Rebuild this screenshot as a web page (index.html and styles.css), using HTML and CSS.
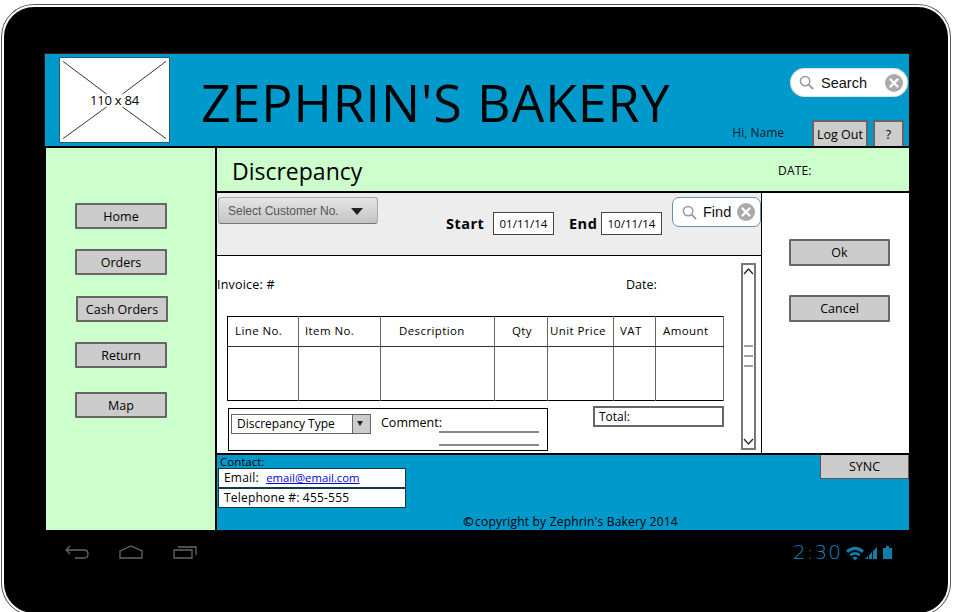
FILE: index.html
```html
<!DOCTYPE html>
<html lang="en">
<head>
<meta charset="utf-8">
<title>Zephrin's Bakery - Discrepancy</title>
<link rel="stylesheet" href="styles.css">
</head>
<body>
<div class="page">
  <div class="device">
    <div class="screen">
      <header class="header">
        <div class="logo">
          <svg class="logo-x" viewBox="0 0 110 84" aria-hidden="true">
            <path d="M3 3 47 36M107 3 63 36M3 81 47 49M107 81 63 49" fill="none" stroke="#333" stroke-width="1"/>
          </svg>
          <span class="logo-text">110 x 84</span>
        </div>
        <h1 class="brand">ZEPHRIN'S BAKERY</h1>
        <div class="header-side">
          <div class="search">
            <svg class="lens" viewBox="0 0 16 16" aria-hidden="true"><circle cx="6.5" cy="6.5" r="5" fill="none" stroke="#999" stroke-width="1.6"/><path d="M10.3 10.3 14.5 14.5" stroke="#999" stroke-width="2" stroke-linecap="round"/></svg>
            <span class="search-label">Search</span>
            <svg class="clear" viewBox="0 0 18 18" aria-hidden="true"><circle cx="9" cy="9" r="9" fill="#aaa"/><path d="M5.5 5.5 12.5 12.5M12.5 5.5 5.5 12.5" stroke="#fff" stroke-width="2.4" stroke-linecap="round"/></svg>
          </div>
          <div class="user-row">
            <span class="hi">Hi, Name</span>
            <button class="btn btn-logout">Log Out</button>
            <button class="btn btn-help">?</button>
          </div>
        </div>
      </header>

      <div class="body">
        <aside class="sidebar">
          <button class="btn nav nav-a">Home</button>
          <button class="btn nav nav-b">Orders</button>
          <button class="btn nav nav-c">Cash Orders</button>
          <button class="btn nav nav-d">Return</button>
          <button class="btn nav">Map</button>
        </aside>

        <main class="main">
          <div class="titlebar">
            <h2 class="page-title">Discrepancy</h2>
            <span class="date-label">DATE:</span>
          </div>

          <div class="work">
            <section class="center">
              <div class="toolbar">
                <button class="select-customer">Select Customer No.<span class="caret"></span></button>
                <span class="range-label range-start">Start</span>
                <span class="date-input">01/11/14</span>
                <span class="range-label range-end">End</span>
                <span class="date-input">10/11/14</span>
                <div class="find">
                  <svg class="lens" viewBox="0 0 16 16" aria-hidden="true"><circle cx="6.5" cy="6.5" r="5" fill="none" stroke="#999" stroke-width="1.6"/><path d="M10.3 10.3 14.5 14.5" stroke="#999" stroke-width="2" stroke-linecap="round"/></svg>
                  <span class="find-label">Find</span>
                  <svg class="clear" viewBox="0 0 18 18" aria-hidden="true"><circle cx="9" cy="9" r="9" fill="#aaa"/><path d="M5.5 5.5 12.5 12.5M12.5 5.5 5.5 12.5" stroke="#fff" stroke-width="2.4" stroke-linecap="round"/></svg>
                </div>
              </div>

              <div class="invoice">
                <div class="invoice-body">
                  <div class="invoice-head">
                    <span class="invoice-no">Invoice: #</span>
                    <span>Date:</span>
                  </div>
                  <table class="lines">
                    <colgroup>
                      <col class="c1"><col class="c2"><col class="c3"><col class="c4"><col class="c5"><col class="c6"><col class="c7">
                    </colgroup>
                    <thead>
                      <tr>
                        <th>Line No.</th>
                        <th>Item No.</th>
                        <th>Description</th>
                        <th>Qty</th>
                        <th>Unit Price</th>
                        <th>VAT</th>
                        <th>Amount</th>
                      </tr>
                    </thead>
                    <tbody>
                      <tr><td></td><td></td><td></td><td></td><td></td><td></td><td></td></tr>
                    </tbody>
                  </table>
                  <div class="invoice-foot">
                    <div class="discrepancy">
                      <div class="dropdown">
                        <span class="dropdown-text">Discrepancy Type</span>
                        <span class="dropdown-arrow"></span>
                      </div>
                      <span class="comment-label">Comment:</span>
                      <div class="comment-lines"><span></span><span></span></div>
                    </div>
                    <div class="total">Total:</div>
                  </div>
                </div>
                <div class="scrollbar" aria-hidden="true">
                  <svg class="scroll-svg" viewBox="0 0 11 183">
                    <path d="M1 9 5.500 4 10 9M1 174 5.500 179 10 174" fill="none" stroke="#222" stroke-width="1.200"/>
                    <path d="M1 81H10M1 91H10M1 101H10" stroke="#444" stroke-width="1"/>
                  </svg>
                </div>
              </div>
            </section>

            <section class="actions">
              <button class="btn action action-ok">Ok</button>
              <button class="btn action">Cancel</button>
            </section>
          </div>

          <footer class="footer">
            <div class="footer-top">
              <div class="contact">
                <div class="contact-title">Contact:</div>
                <div class="contact-row">Email: <a class="mail" href="#">email@email.com</a></div>
                <div class="contact-row">Telephone #: 455-555</div>
              </div>
              <button class="btn sync">SYNC</button>
            </div>
            <div class="copyright"><span class="copy-mark">&copy;</span>copyright by Zephrin's Bakery 2014</div>
          </footer>
        </main>
      </div>
    </div>

    <div class="android">
      <div class="soft-keys">
        <svg class="key" viewBox="0 0 24 14" aria-hidden="true"><path d="M5 1 1 5 5 9M1 5H19Q23 5 23 9T19 13H10" fill="none" stroke="#666" stroke-width="1.300"/></svg>
        <svg class="key" viewBox="0 0 24 14" aria-hidden="true"><path d="M1 6 12 1 23 6V13H1Z" fill="none" stroke="#666" stroke-width="1.300"/></svg>
        <svg class="key" viewBox="0 0 24 14" aria-hidden="true"><path d="M1 5H19V13H1ZM5 2H23V10" fill="none" stroke="#666" stroke-width="1.300"/></svg>
      </div>
      <div class="status">
        <span class="clock">2:30</span>
        <svg class="stat-wifi" viewBox="0 0 18 14" aria-hidden="true"><path d="M0 4.500Q9-3 18 4.500L16 7Q9 1 2 7ZM3.300 8.300Q9 3.500 14.700 8.300L13 10.300Q9 7 5 10.300ZM6.300 11.700Q9 9.500 11.700 11.700L9 14.500Z" fill="#0e7da8"/></svg>
        <svg class="stat-signal" viewBox="0 0 12 13" aria-hidden="true"><path d="M0 13 3 10V13ZM4 13V9L7 6V13ZM8 13V5L12 1V13Z" fill="#0e7da8"/></svg>
        <svg class="stat-battery" viewBox="0 0 9 13" aria-hidden="true"><path d="M0 2H3V0H6V2H9V13H0Z" fill="#0e7da8"/></svg>
      </div>
    </div>
  </div>
</div>
</body>
</html>
```
FILE: styles.css
```css
* { box-sizing: border-box; }
html, body { margin: 0; padding: 0; background: #fff; }
body { font-family: "Open Sans", "Noto Sans", sans-serif; color: #000; }
h1, h2 { margin: 0; font-weight: 400; }

.page { width: 953px; height: 612px; overflow: hidden; padding: 5px 0 0 2px; }

.device {
  width: 948px;
  height: 610px;
  padding: 46px 0 0 40px;
  background: #000;
  border: 2px solid #fff;
  border-radius: 32px;
  box-shadow: 0 0 0 1px #555;
}

.screen { width: 865px; height: 477px; display: flex; flex-direction: column; }

/* header */
.header {
  flex: none;
  height: 95px;
  display: flex;
  background: #0099cc;
  border-top: 1px solid #4d0a0a;
  border-left: 1px solid #4d0a0a;
  border-bottom: 2px solid #000;
}
.logo {
  position: relative;
  flex: none;
  width: 111px;
  height: 86px;
  margin: 3px 0 0 14px;
  display: flex;
  align-items: center;
  justify-content: center;
  background: #fff;
  border: 1px solid #20607a;
}
.logo-x { position: absolute; inset: 0; width: 100%; height: 100%; }
.logo-text { position: relative; font-size: 13px; color: #000; letter-spacing: -.2px; }
.brand {
  flex: 1;
  margin: 13px 0 0 31px;
  font-size: 52px;
  font-weight: 500;
  line-height: 70px;
  letter-spacing: .85px;
  white-space: nowrap;
  color: #000;
}
.header-side { flex: none; width: 176px; display: flex; flex-direction: column; align-items: flex-end; }
.search {
  width: 118px;
  height: 29px;
  margin: 14px 1px 0 0;
  padding: 0 5px 0 9px;
  display: flex;
  align-items: center;
  background: #fff;
  border-radius: 15px;
  box-shadow: inset 0 0 2px #888;
}
.lens { flex: none; width: 15px; height: 15px; }
.clear { flex: none; width: 18px; height: 18px; margin-left: auto; }
.search-label { margin-left: 7px; font-family: "Liberation Sans", sans-serif; font-size: 14.500px; color: #111; }
.user-row { margin-top: 23px; display: flex; align-items: flex-end; padding-right: 5px; height: 26px; }
.hi { margin-right: 28px; margin-bottom: 5px; font-size: 12px; white-space: nowrap; color: #0a1a22; }

/* buttons */
.btn {
  display: block;
  padding: 0;
  background: #cccccc;
  border: 2px solid #666;
  border-radius: 1px;
  font-family: "Open Sans", "Noto Sans", sans-serif;
  font-size: 12.500px;
  color: #000;
  text-align: center;
}
.btn-logout { width: 56px; height: 26px; margin-right: 5px; border-bottom: 0; }
.btn-help { width: 31px; height: 26px; border-bottom: 0; }

/* body */
.body { flex: 1; display: flex; min-height: 0; }
.sidebar {
  flex: none;
  width: 173px;
  padding: 55px 0 0 29px;
  background: #ccffcc;
  border-left: 2px solid #000;
  border-right: 2px solid #000;
}
.nav { width: 92px; height: 26px; margin-bottom: 24px; }
.nav-a { margin-bottom: 20px; }
.nav-b { margin-bottom: 21px; }
.nav-c { margin-left: 1px; margin-bottom: 20px; }

.main { flex: 1; display: flex; flex-direction: column; min-width: 0; }
.titlebar {
  flex: none;
  height: 44px;
  padding-left: 15px;
  display: flex;
  align-items: center;
  background: #ccffcc;
  border-bottom: 1px solid #000;
}
.page-title { width: 546px; margin-top: 2px; font-size: 23px; letter-spacing: 0; line-height: 42px; }
.date-label { font-size: 12px; letter-spacing: .2px; margin-top: 1px; }

.work { flex: none; height: 263px; display: flex; }
.center { flex: none; width: 545px; display: flex; flex-direction: column; border-right: 1px solid #000; border-bottom: 2px solid #000; }
.toolbar {
  position: relative;
  flex: none;
  height: 64px;
  display: flex;
  align-items: flex-start;
  background: #ededed;
  border-top: 1px solid #000;
  border-bottom: 1px solid #000;
}
.select-customer {
  position: relative;
  flex: none;
  width: 160px;
  height: 27px;
  margin: 4px 0 0 1px;
  padding: 0 0 0 9px;
  text-align: left;
  background: linear-gradient(#e4e4e4, #c4c4c4);
  border: 1px solid #aaa;
  border-bottom-color: #777;
  border-radius: 3px;
  font-family: "Liberation Sans", sans-serif;
  font-size: 12px;
  color: #555;
}
.caret {
  position: absolute;
  right: 14px;
  top: 10px;
  border-style: solid;
  border-width: 7px 6.500px 0;
  border-color: #222 transparent transparent;
}
.range-label { flex: none; margin-top: 21px; font-size: 14.500px; font-weight: 700; line-height: 20px; letter-spacing: .5px; white-space: nowrap; }
.range-start { width: 40px; margin-left: 68px; margin-right: 7px; }
.range-end { width: 26px; margin-left: 15px; margin-right: 6px; }
.date-input {
  flex: none;
  width: 61px;
  height: 23px;
  margin-top: 19px;
  background: #fff;
  border: 1px solid #444;
  font-size: 11.500px;
  line-height: 21px;
  text-align: center;
}
.find {
  position: absolute;
  top: 4px;
  right: 0;
  width: 89px;
  height: 30px;
  padding: 0 5px 0 9px;
  display: flex;
  align-items: center;
  background: #fff;
  border: 1px solid #6f8fb0;
  border-radius: 7px;
}
.find-label { margin-left: 6px; font-family: "Liberation Sans", sans-serif; font-size: 14.500px; color: #111; }

.invoice { flex: 1; display: flex; background: #fff; min-height: 0; }
.invoice-body { flex: none; width: 524px; display: flex; flex-direction: column; }
.invoice-head { flex: none; height: 60px; padding-top: 20px; display: flex; font-size: 12.500px; line-height: 17px; }
.invoice-no { flex: none; width: 409px; letter-spacing: .2px; }

.lines { width: 496px; margin-left: 10px; border-collapse: collapse; table-layout: fixed; border: 1px solid #000; }
.c1 { width: 71px; } .c2 { width: 82px; } .c3 { width: 114px; } .c4 { width: 53px; }
.c5 { width: 66px; } .c6 { width: 42px; } .c7 { width: 68px; }
.lines th, .lines td { padding: 0; border-right: 1.500px solid #666; }
.lines th {
  height: 30px;
  padding-bottom: 2px;
  border-bottom: 1.500px solid #333;
  font-size: 11.500px;
  font-weight: 400;
  text-align: left;
  letter-spacing: .4px;
  white-space: nowrap;
}
.lines th:nth-child(1) { padding-left: 7px; }
.lines th:nth-child(2) { padding-left: 6px; }
.lines th:nth-child(3) { padding-left: 18px; }
.lines th:nth-child(4) { padding-left: 17px; }
.lines th:nth-child(5) { padding-left: 2px; }
.lines th:nth-child(6) { padding-left: 6px; }
.lines th:nth-child(7) { padding-left: 7px; }
.lines td { height: 54px; }

.invoice-foot { flex: none; margin: 7px 0 0 11px; display: flex; align-items: flex-start; }
.discrepancy {
  flex: none;
  width: 320px;
  height: 43px;
  padding: 5px 0 0 2px;
  display: flex;
  align-items: flex-start;
  border: 1px solid #000;
}
.dropdown { flex: none; width: 140px; height: 20px; display: flex; border: 1.500px solid #666; background: #fff; }
.dropdown-text { flex: 1; padding-left: 5px; font-size: 12px; line-height: 17px; white-space: nowrap; }
.dropdown-arrow {
  flex: none;
  position: relative;
  width: 18px;
  background: #ccc;
  border-left: 1.500px solid #666;
}
.dropdown-arrow::after {
  content: "";
  position: absolute;
  left: 4px;
  top: 6px;
  border-style: solid;
  border-width: 5px 3.500px 0;
  border-color: #222 transparent transparent;
}
.comment-label { flex: none; width: 58px; margin-left: 10px; font-size: 12.500px; line-height: 18px; }
.comment-lines { flex: none; width: 100px; height: 32px; }
.comment-lines span { display: block; height: 2px; margin-top: 11px; background: #888; }
.comment-lines span:first-child { margin-top: 17px; }
.total {
  flex: none;
  width: 131px;
  height: 21px;
  margin: -2px 0 0 45px;
  padding-left: 4px;
  border: 2px solid #666;
  font-size: 12px;
  line-height: 17px;
}
.scrollbar {
  flex: none;
  width: 15px;
  height: 187px;
  margin-top: 7px;
  border: 2px solid #777;
}
.scroll-svg { display: block; width: 11px; height: 183px; }

.actions { flex: 1; padding: 46px 0 0 27px; background: #fff; border-top: 1px solid #000; border-bottom: 2px solid #000; }
.action { width: 101px; height: 27px; margin-bottom: 29px; }

/* footer */
.footer { flex: 1; display: flex; flex-direction: column; background: #0099cc; min-height: 0; }
.footer-top { flex: none; height: 59px; display: flex; justify-content: space-between; align-items: flex-start; }
.contact { width: 189px; padding-left: 1px; }
.contact-title { height: 13px; padding-left: 2px; font-size: 11.500px; line-height: 13px; }
.contact-row {
  height: 20px;
  padding-left: 5px;
  background: #fff;
  border: 1px solid #10394a;
  font-size: 12px;
  line-height: 18px;
  letter-spacing: .2px;
  white-space: nowrap;
}
.mail { margin-left: 4px; font-size: 11.300px; letter-spacing: 0; color: #0000e0; }
.sync { width: 89px; height: 24px; border-width: 1px; border-color: #555; border-top: 0; }
.copyright { margin: 0 0 0 246px; font-size: 12px; line-height: 14px; letter-spacing: .2px; white-space: nowrap; }
.copy-mark { font-weight: 700; font-size: 13px; margin-right: 1px; }

/* android system bar */
.android { display: flex; justify-content: space-between; padding: 15px 17px 0 21px; width: 865px; }
.soft-keys { display: flex; gap: 30px; }
.key { display: block; width: 24px; height: 14px; }
.status { display: flex; align-items: center; height: 15px; }
.clock { font-family: "DejaVu Sans", sans-serif; font-weight: 200; font-size: 20px; letter-spacing: 1px; color: #1488b8; line-height: 14px; margin-top: -1px; }
.stat-wifi { width: 18px; height: 14px; margin-left: 4px; }
.stat-signal { width: 12px; height: 13px; margin-left: 1px; }
.stat-battery { width: 9px; height: 13px; margin-left: 6px; }
```
